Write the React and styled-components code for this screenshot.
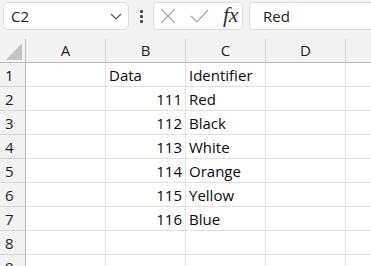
import React from "react";
import styled, { createGlobalStyle } from "styled-components";

const Global = createGlobalStyle`
  html, body {
    margin: 0;
    padding: 0;
    background: #f3f3f3;
    overflow: hidden;
  }
  body {
    font-family: "Open Sans", "Noto Sans", sans-serif;
  }
`;

const Page = styled.div`
  width: 371px;
  height: 266px;
  overflow: hidden;
  background: #f3f3f3;
`;

const Toolbar = styled.div`
  display: flex;
  align-items: center;
  height: 39px;
  padding: 1px 0 8px 3px;
  box-sizing: border-box;
  overflow: hidden;
`;

const Box = styled.div`
  height: 28px;
  box-sizing: border-box;
  background: #fff;
  border: 1px solid #dcdcdc;
  border-radius: 5px;
  display: flex;
  align-items: center;
  flex-shrink: 0;
`;

const NameBox = styled(Box)`
  width: 126px;
  padding: 0 6px 0 7px;
  justify-content: space-between;
  font-size: 15px;
  color: #1a1a1a;
`;

const Dots = styled.div`
  display: flex;
  flex-direction: column;
  gap: 2px;
  margin: 0 10px 0 11px;
  span {
    width: 3px;
    height: 3px;
    background: #444;
    border-radius: 1px;
  }
`;

const FxBox = styled(Box)`
  width: 90px;
  padding: 0 4px 0 6px;
  justify-content: space-between;
`;

const Fx = styled.span`
  font-family: "Liberation Serif", "DejaVu Serif", serif;
  font-style: italic;
  font-size: 22px;
  color: #333;
  letter-spacing: -0.5px;
  line-height: 1;
  margin-top: -3px;
`;

const FormulaBox = styled(Box)`
  width: 150px;
  margin-left: 6px;
  padding-left: 13px;
  font-size: 15px;
  color: #1a1a1a;
`;

const Sheet = styled.div`
  display: grid;
  grid-template-columns: 26px repeat(5, 80px);
  grid-auto-rows: 24px;
  background: #fff;
`;

const Cell = styled.div`
  box-sizing: border-box;
  border-right: 1px solid #e1e1e1;
  border-bottom: 1px solid #e1e1e1;
  font-size: 15px;
  line-height: 24px;
  color: #0a0a0a;
  padding: 0 3px;
  white-space: nowrap;
  overflow: hidden;
  text-align: ${(p) => (p.$num ? "right" : "left")};
`;

const ColHead = styled.div`
  box-sizing: border-box;
  height: 24px;
  background: #f3f3f3;
  border-right: 1px solid #d6d6d6;
  border-bottom: 1px solid #bdbdbd;
  font-size: 15px;
  line-height: 23px;
  text-align: center;
  color: #222;
`;

const Corner = styled(ColHead)`
  border-right: 1px solid #bdbdbd;
  display: flex;
  align-items: flex-end;
  justify-content: flex-end;
  padding: 0 3px 2px 0;
`;

const RowHead = styled.div`
  box-sizing: border-box;
  background: #f3f3f3;
  border-right: 1px solid #bdbdbd;
  border-bottom: 1px solid #d6d6d6;
  font-size: 15px;
  line-height: 24px;
  padding-left: 5px;
  color: #222;
`;

const cols = ["A", "B", "C", "D", ""];
const rows = [
  ["", "Data", "Identifier"],
  ["", 111, "Red"],
  ["", 112, "Black"],
  ["", 113, "White"],
  ["", 114, "Orange"],
  ["", 115, "Yellow"],
  ["", 116, "Blue"],
  ["", "", ""],
  ["", "", ""],
];

export default function App() {
  return (
    <Page>
      <Global />
      <Toolbar>
        <NameBox>
          <span>C2</span>
          <svg width="12" height="7" viewBox="0 0 12 7">
            <path d="M1 1l5 5 5-5" fill="none" stroke="#555" strokeWidth="1.2" />
          </svg>
        </NameBox>
        <Dots>
          <span />
          <span />
          <span />
        </Dots>
        <FxBox>
          <svg width="16" height="16" viewBox="0 0 16 16">
            <path d="M1 1l14 14M15 1L1 15" stroke="#a6a6a6" strokeWidth="1.2" fill="none" />
          </svg>
          <svg width="19" height="14" viewBox="0 0 19 14">
            <path d="M1 7l6 6L18 1" stroke="#a6a6a6" strokeWidth="1.2" fill="none" />
          </svg>
          <Fx>fx</Fx>
        </FxBox>
        <FormulaBox>Red</FormulaBox>
      </Toolbar>
      <Sheet>
        <Corner>
          <svg width="16" height="17" viewBox="0 0 16 17">
            <polygon points="0,17 16,0 16,17" fill="#c4c4c4" />
          </svg>
        </Corner>
        {cols.map((c, i) => (
          <ColHead key={i}>{c}</ColHead>
        ))}
        {rows.map((r, i) => (
          <React.Fragment key={i}>
            <RowHead>{i + 1}</RowHead>
            <Cell />
            <Cell $num={typeof r[1] === "number"}>{r[1]}</Cell>
            <Cell>{r[2]}</Cell>
            <Cell />
            <Cell />
          </React.Fragment>
        ))}
      </Sheet>
    </Page>
  );
}
